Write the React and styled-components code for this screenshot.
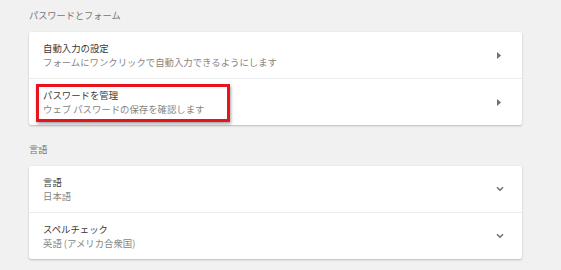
import React from 'react';
import styled, { createGlobalStyle } from 'styled-components';

const GlobalStyle = createGlobalStyle`
  html, body {
    margin: 0;
    padding: 0;
    background: #f1f1f1;
  }
  body {
    font-family: "Noto Sans CJK JP", "Noto Sans", Roboto, sans-serif;
  }
`;

const Page = styled.div`
  padding: 8px 39px 0 29px;
  width: 493px;
`;

const SectionTitle = styled.div`
  font-size: 9.2px;
  line-height: 14px;
  color: #757575;
  margin-bottom: 10px;
`;

const Card = styled.div`
  background: #fff;
  border-radius: 2px;
  box-shadow: 0 1px 2px rgba(0, 0, 0, 0.22), 0 0 1px rgba(0, 0, 0, 0.08);
  margin-bottom: 17px;
`;

const Row = styled.div`
  position: relative;
  display: flex;
  align-items: center;
  height: 46px;
  padding: 0 ${props => props.pr || 21}px 0 14px;
  & + & {
    border-top: 1px solid #ececec;
  }
`;

const Texts = styled.div`
  flex: 1;
  display: flex;
  flex-direction: column;
`;

const Title = styled.div`
  font-size: 9.4px;
  line-height: 14px;
  color: #3a3a3a;
`;

const Sub = styled.div`
  font-size: 9.4px;
  line-height: 14px;
  color: #858585;
`;

const Highlight = styled.div`
  position: absolute;
  left: 7px;
  top: 5px;
  width: 188px;
  height: 32px;
  border: 3px solid #e8141b;
  box-shadow: 1px 2px 3px rgba(0, 0, 0, 0.35);
  pointer-events: none;
`;

const Arrow = () => (
  <svg width="4" height="7" viewBox="0 0 4 7">
    <path d="M0 0 L4 3.5 L0 7 Z" fill="#6e6e6e" />
  </svg>
);

const Chevron = () => (
  <svg width="8" height="6" viewBox="0 0 8 6">
    <path d="M1 1.2 L4 4.2 L7 1.2" fill="none" stroke="#6e6e6e" strokeWidth="1.6" />
  </svg>
);

export default function App() {
  return (
    <>
      <GlobalStyle />
      <Page>
        <SectionTitle>パスワードとフォーム</SectionTitle>
        <Card>
          <Row>
            <Texts>
              <Title>自動入力の設定</Title>
              <Sub>フォームにワンクリックで自動入力できるようにします</Sub>
            </Texts>
            <Arrow />
          </Row>
          <Row>
            <Texts>
              <Title>パスワードを管理</Title>
              <Sub>ウェブ パスワードの保存を確認します</Sub>
            </Texts>
            <Arrow />
            <Highlight />
          </Row>
        </Card>
        <SectionTitle>言語</SectionTitle>
        <Card>
          <Row pr={18}>
            <Texts>
              <Title>言語</Title>
              <Sub>日本語</Sub>
            </Texts>
            <Chevron />
          </Row>
          <Row pr={18}>
            <Texts>
              <Title>スペルチェック</Title>
              <Sub>英語 (アメリカ合衆国)</Sub>
            </Texts>
            <Chevron />
          </Row>
        </Card>
      </Page>
    </>
  );
}
